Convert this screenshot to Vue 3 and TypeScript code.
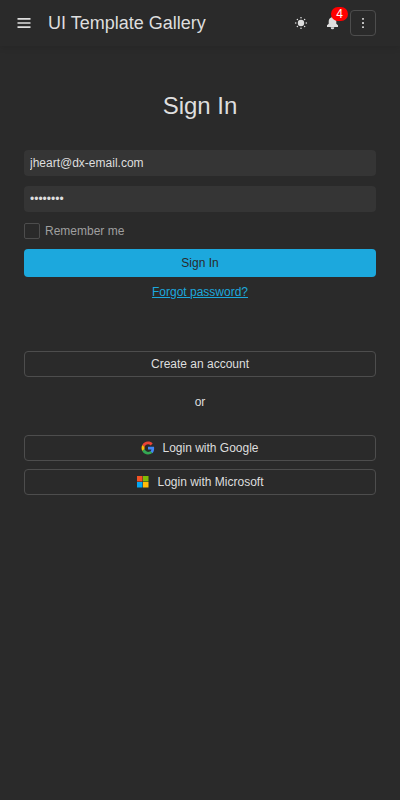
<script setup lang="ts">
import { ref } from 'vue'

const email = ref('jheart@dx-email.com')
const password = ref('password')
const remember = ref(false)
const notifications = 4
</script>

<template>
  <div class="page">
    <header class="toolbar">
      <button class="icon-button menu" type="button">
        <svg width="14" height="14" viewBox="0 0 14 14">
          <path d="M.5 2.900h13M.5 7h13M.5 11.100h13" stroke="#dedede" stroke-width="1.700" />
        </svg>
      </button>
      <div class="title">UI Template Gallery</div>
      <button class="icon-button theme" type="button">
        <svg width="14" height="14" viewBox="0 0 14 14" fill="#dedede">
          <circle cx="7" cy="7" r="3.200" />
          <circle cx="7" cy="1.700" r=".8" />
          <circle cx="7" cy="12.300" r=".8" />
          <circle cx="1.700" cy="7" r=".8" />
          <circle cx="12.300" cy="7" r=".8" />
          <circle cx="3.400" cy="3.400" r=".75" />
          <circle cx="10.600" cy="3.400" r=".75" />
          <circle cx="3.400" cy="10.600" r=".75" />
          <circle cx="10.600" cy="10.600" r=".75" />
        </svg>
      </button>
      <button class="icon-button bell" type="button">
        <svg width="14" height="14" viewBox="0 0 14 14" fill="#dedede">
          <path d="M6.500 1.500a1 1 0 0 1 2 0C10.600 2 11.300 3.600 11.300 5.600v2.200l1.700 1.500V11H2V9.300l1.700-1.500V5.600C3.700 3.600 4.400 2 6.500 1.500z" />
          <path d="M5.800 11.200h3.400v.6a1.700 1.500 0 0 1-3.400 0z" />
        </svg>
        <span class="badge">{{ notifications }}</span>
      </button>
      <button class="icon-button more" type="button">
        <svg width="14" height="14" viewBox="0 0 14 14" fill="#dedede">
          <rect x="6.100" y="1.900" width="1.800" height="1.800" rx=".5" />
          <rect x="6.100" y="6.100" width="1.800" height="1.800" rx=".5" />
          <rect x="6.100" y="10.200" width="1.800" height="1.800" rx=".5" />
        </svg>
      </button>
    </header>

    <main class="card">
      <h1>Sign In</h1>
      <form @submit.prevent>
        <input v-model="email" class="field" type="text" />
        <input v-model="password" class="field" type="password" />
        <label class="remember">
          <input v-model="remember" type="checkbox" />
          <span>Remember me</span>
        </label>
        <button class="submit" type="submit">Sign In</button>
      </form>
      <a class="forgot" href="#">Forgot password?</a>
      <button class="outlined create" type="button">Create an account</button>
      <div class="or">or</div>
      <button class="outlined google" type="button">
        <svg width="14" height="14" viewBox="0 0 48 48">
          <path fill="#ea4335" d="M24 11.500c3.500 0 6.700 1.200 9.200 3.600l6.900-6.900C35.900 4.300 30.500 2 24 2 15.400 2 8 6.900 4.400 14.100l8 6.200C14.300 15.200 18.700 11.500 24 11.500z" />
          <path fill="#4285f4" d="M45 24.500c0-1.600-.2-3-.4-4.500H24v9h11.900c-.6 3-2.200 5.400-4.600 7l7.700 6c4.500-4.200 6-10.400 6-17.500z" />
          <path fill="#fbbc05" d="M12.400 27.700a13 13 0 0 1 0-7.400l-8-6.200a22 22 0 0 0 0 19.800z" />
          <path fill="#34a853" d="M24 46c6.100 0 11.200-2 15-5.500l-7.700-5.300c-2 1.400-4.500 2.300-7.300 2.300-5.300 0-9.700-4.700-11.600-9.800l-8 6.200C8 41.100 15.400 46 24 46z" />
        </svg>
        <span>Login with Google</span>
      </button>
      <button class="outlined microsoft" type="button">
        <svg width="14" height="14" viewBox="0 0 14 14">
          <path fill="#f35325" d="M1 1h5.500v5.500H1z" />
          <path fill="#81bc06" d="M7 1h5.500v5.500H7z" />
          <path fill="#05a6f0" d="M1 7h5.500v5.500H1z" />
          <path fill="#ffba08" d="M7 7h5.500v5.500H7z" />
        </svg>
        <span>Login with Microsoft</span>
      </button>
    </main>
  </div>
</template>

<style>
body {
  background: #2a2a2a;
}
</style>

<style scoped>
.page {
  box-sizing: border-box;
  min-height: 100vh;
  background: #2a2a2a;
  color: #dedede;
  font: 12px/16px "Liberation Sans", Arial, sans-serif;
}
.page * {
  box-sizing: border-box;
}
button,
input {
  margin: 0;
  font: inherit;
  color: inherit;
}
svg {
  display: block;
  flex: none;
}
.toolbar {
  display: flex;
  align-items: center;
  height: 46px;
  padding: 0 24px 0 11px;
  box-shadow: 0 2px 6px rgba(0, 0, 0, 0.1);
}
.icon-button {
  position: relative;
  display: flex;
  align-items: center;
  justify-content: center;
  width: 26px;
  height: 26px;
  padding: 0;
  border: 0;
  border-radius: 4px;
  background: none;
}
.title {
  flex: 1;
  margin-left: 11px;
  font-size: 18px;
  line-height: 24px;
}
.bell {
  margin: 0 5px;
}
.badge {
  position: absolute;
  top: -3px;
  left: 12px;
  width: 17px;
  height: 14px;
  border-radius: 7px;
  background: #f00;
  color: #fff;
  line-height: 14px;
  text-align: center;
}
.more {
  border: 1px solid #4d4d4d;
}
.card {
  display: flex;
  flex-direction: column;
  padding: 44px 24px 0;
}
h1 {
  margin: 0 0 28px;
  font-size: 24px;
  line-height: 32px;
  font-weight: 400;
  text-align: center;
}
form {
  display: flex;
  flex-direction: column;
}
.field {
  width: 100%;
  height: 26px;
  margin-bottom: 10px;
  padding: 0 6px;
  border: 0;
  border-radius: 4px;
  background: #353535;
  outline: none;
}
.remember {
  display: flex;
  align-items: center;
  gap: 5px;
  height: 18px;
  margin-bottom: 9px;
  color: #9f9f9f;
}
.remember input {
  appearance: none;
  width: 16px;
  height: 16px;
  border: 1px solid #4d4d4d;
  border-radius: 2px;
}
.submit {
  height: 28px;
  padding: 0;
  border: 0;
  border-radius: 4px;
  background: #1ca8dd;
  color: #2a2a2a;
}
.forgot {
  align-self: center;
  margin: 7px 0 51px;
  color: #1ca8dd;
}
.outlined {
  display: flex;
  align-items: center;
  justify-content: center;
  gap: 7px;
  height: 26px;
  padding: 0;
  border: 1px solid #4d4d4d;
  border-radius: 4px;
  background: none;
}
.or {
  margin: 17px 0 25px;
  text-align: center;
}
.google {
  margin-bottom: 8px;
}
</style>
